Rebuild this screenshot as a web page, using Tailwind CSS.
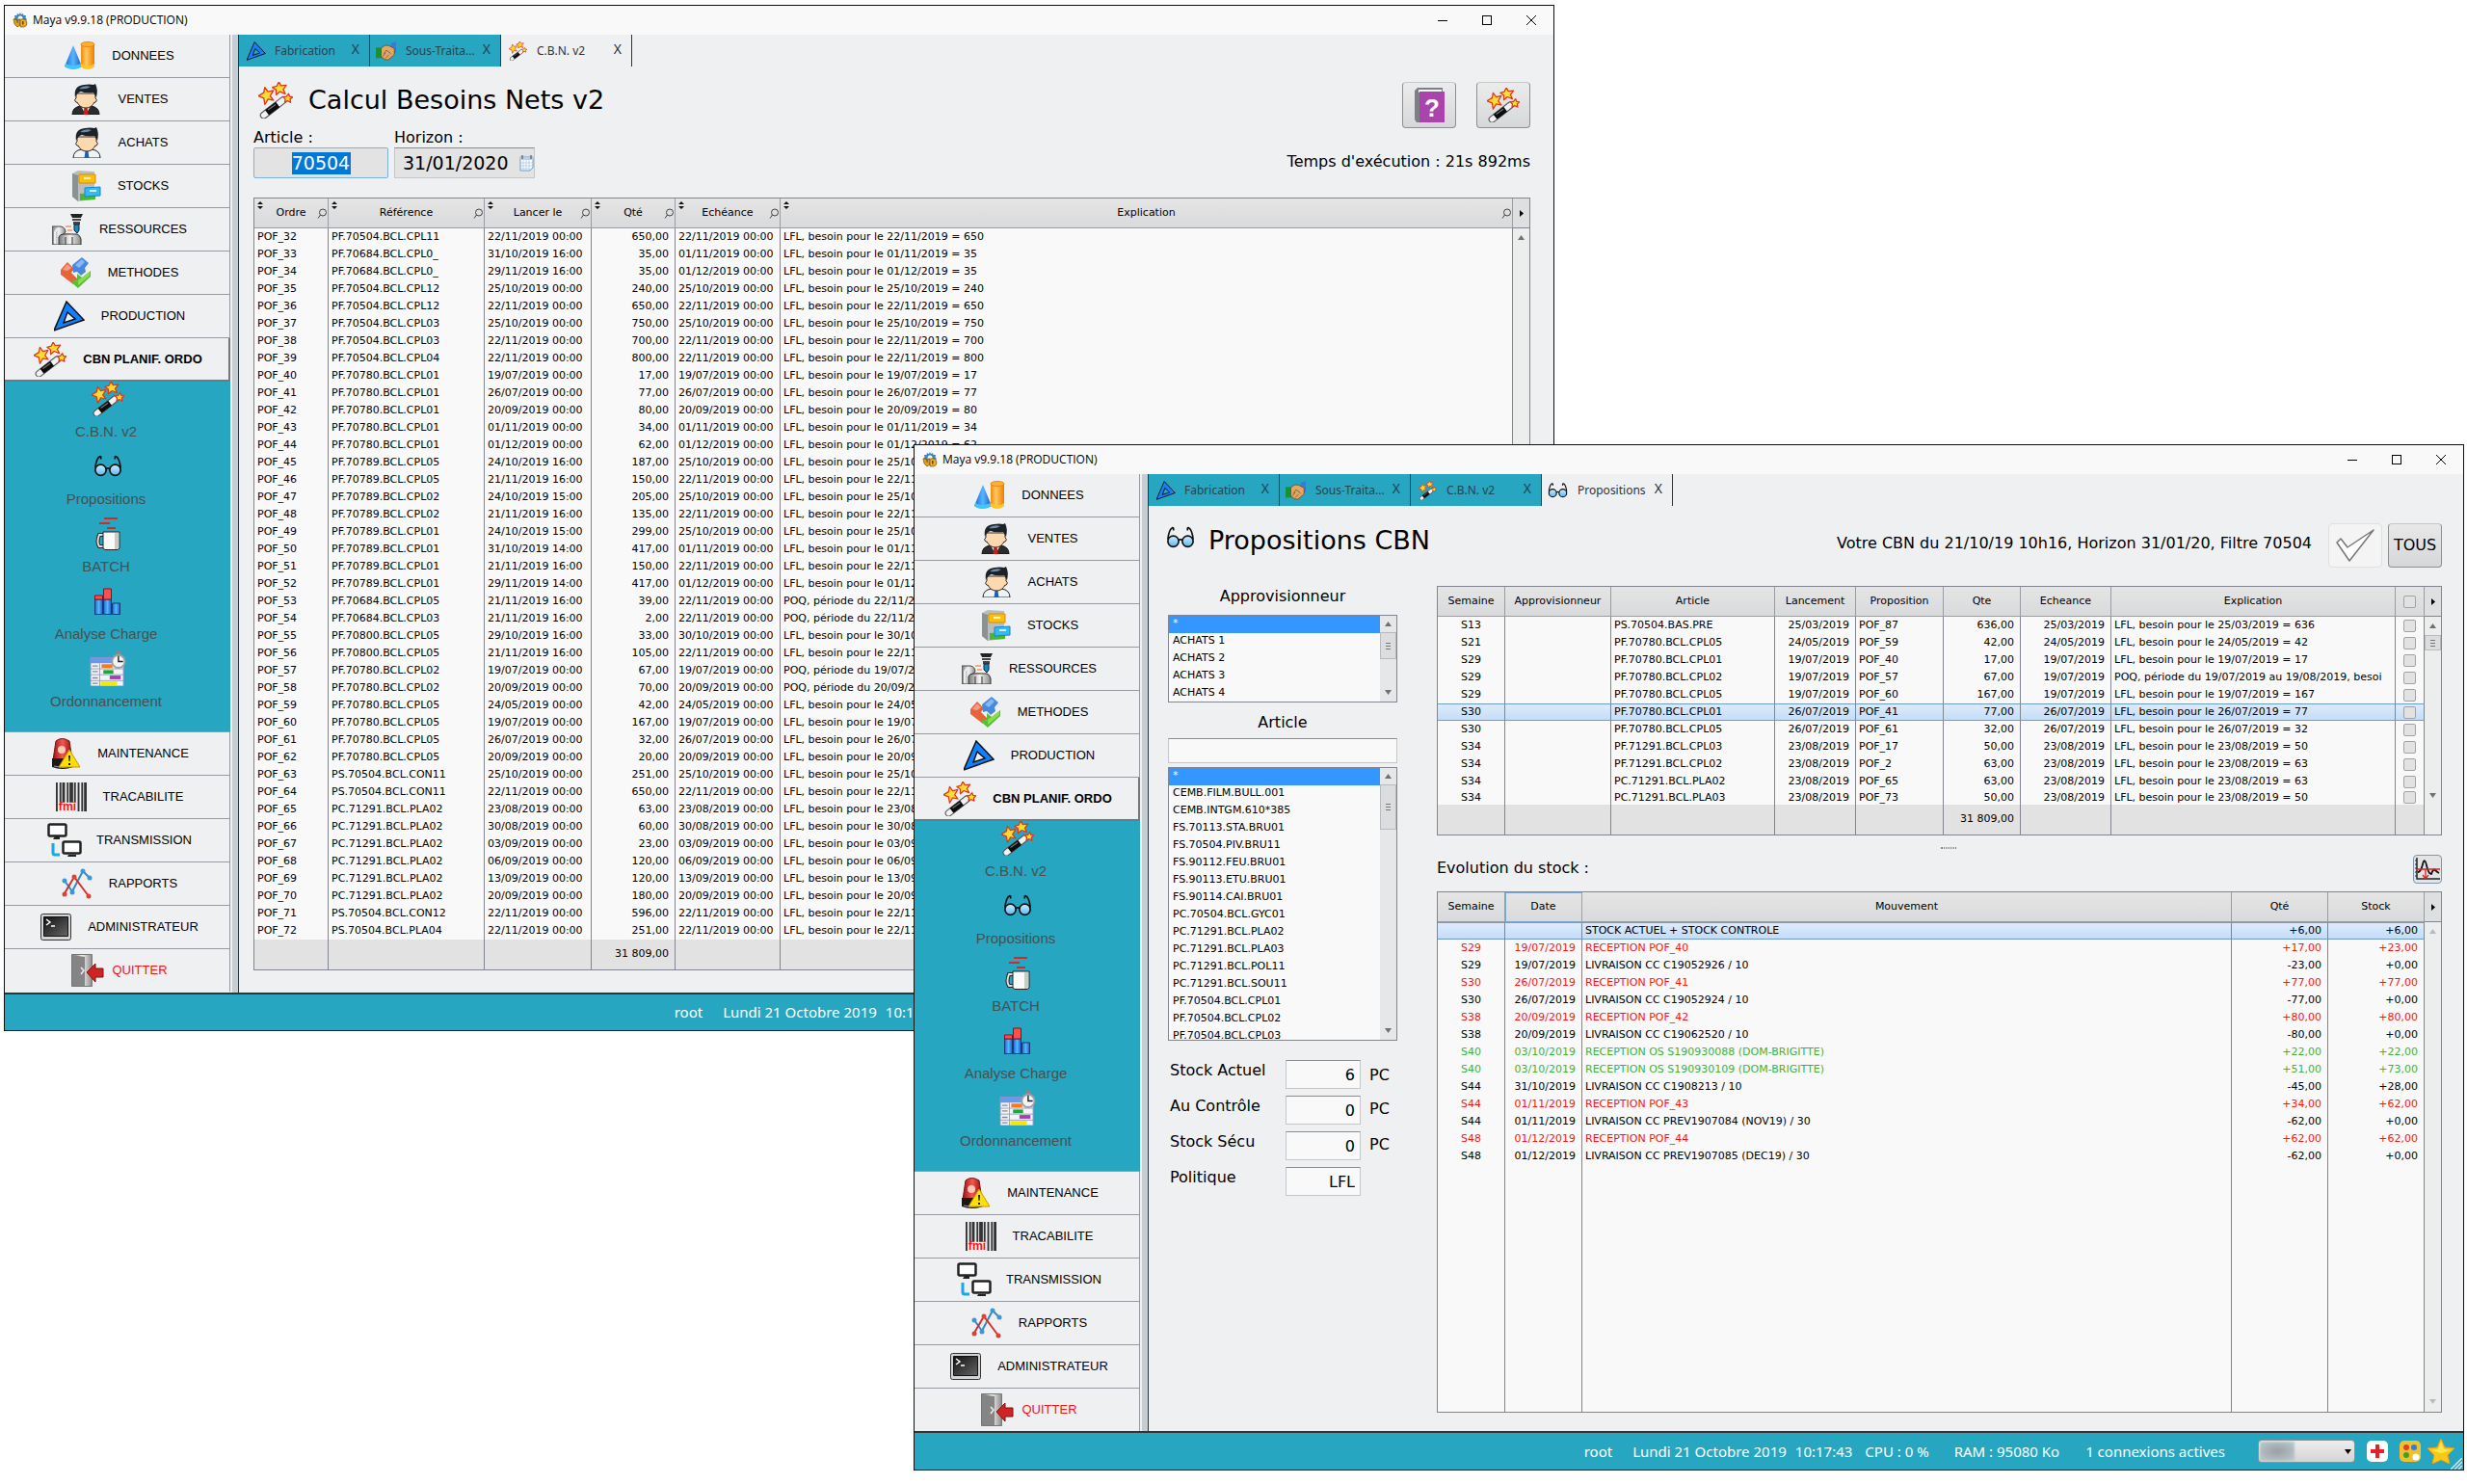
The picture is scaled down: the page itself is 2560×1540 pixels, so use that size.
<!DOCTYPE html>
<html lang="fr">
  <head>
    <meta charset="UTF-8" />
    <meta name="viewport" content="width=device-width, initial-scale=1.0" />
    <title>Maya v9.9.18 (PRODUCTION)</title>
    <script src="https://cdn.jsdelivr.net/npm/@tailwindcss/browser@4"></script>
  </head>

  <body class="bg-white text-black font-['DejaVu_Sans',Verdana,sans-serif] text-[11px]">
    <!-- Icons -->
    <svg class="absolute size-0">
      <defs>
        <linearGradient id="gBlue" x1="0" x2="1"><stop offset="0" stop-color="#1668d8" /><stop offset=".5" stop-color="#58b4ff" /><stop offset="1" stop-color="#1160c8" /></linearGradient>
        <linearGradient id="gOrange" x1="0" x2="1"><stop offset="0" stop-color="#f08a10" /><stop offset=".4" stop-color="#ffc860" /><stop offset="1" stop-color="#f07c00" /></linearGradient>
        <linearGradient id="gGrey" x1="0" x2="1"><stop offset="0" stop-color="#777" /><stop offset=".5" stop-color="#f4f4f4" /><stop offset="1" stop-color="#8a8a8a" /></linearGradient>
        <linearGradient id="gRed" x1="0" x2="1"><stop offset="0" stop-color="#a80f14" /><stop offset=".5" stop-color="#f05a50" /><stop offset="1" stop-color="#8f0a10" /></linearGradient>
        <linearGradient id="gDark" x1="0" y1="0" x2="1" y2="1"><stop offset="0" stop-color="#111" /><stop offset="1" stop-color="#666" /></linearGradient>
        <linearGradient id="gLens" x1="0" y1="0" x2="0" y2="1"><stop offset="0" stop-color="#d4efff" /><stop offset="1" stop-color="#58b6f4" /></linearGradient>
      </defs>
      <symbol id="app" viewBox="0 0 16 16">
        <path d="M8 0l1 2 2-1 .5 2H14l-.5 2.500L15 7l-2 2H3L1 7l1.500-1.500L2 3h2.500L5 1l2 1z" fill="#3a86c0" /><circle cx="8" cy="6" r="2.500" fill="#fff" />
        <path d="M1 7h3l1 4 1-4h2v6l-3 2-3-3z" fill="#e8a010" stroke="#5a4210" stroke-width=".6" /><path d="M8 7h4q3 1 3 4t-3 4H8z" fill="#f0b020" stroke="#5a4210" stroke-width=".6" /><path d="M10 9h1.500v3.500H10z" fill="#5a4210" />
      </symbol>
      <symbol id="shapes" viewBox="0 0 32 32">
        <path d="M9 5L0 27q9 6 18 0z" fill="url(#gBlue)" /><path d="M0 27q9 6 18 0l-1-3q-8 4-16 0z" fill="#3cc8ff" />
        <path d="M17 4v23q6.500 6 14 0V4z" fill="url(#gOrange)" /><path d="M17 24q7 5 14 0v3q-7 6-14 0z" fill="#ffc820" /><ellipse cx="24" cy="4" rx="7" ry="2.500" fill="#ffb030" stroke="#e88a10" />
      </symbol>
      <symbol id="suit" viewBox="0 0 32 32">
        <path d="M2 32q0-8 9-9h10q9 1 9 9z" fill="#2c2c2c" stroke="#111" /><path d="M11 23l5 9 5-9z" fill="#fff" /><path d="M14.500 24h3l1 8h-5z" fill="#d01818" />
        <path d="M6 10v5q-2 1-1 3 1 2 2 1 3 6 9 6t9-6q1 1 2-1 1-2-1-3v-5z" fill="#fdd9b0" stroke="#3a2a1a" />
        <path d="M5 14Q3 2 14 1q6-1 10 0l2-1q3 6 1 14l-3-5q-9 1-13-1-4 1-6 6z" fill="#1c222a" /><path d="M9 5q5-4 12-2-4 3-12 2z" fill="#6f8ba6" />
      </symbol>
      <symbol id="shirt" viewBox="0 0 32 32">
        <path d="M2 32q0-8 9-9h10q9 1 9 9z" fill="#eef3f8" stroke="#222" /><path d="M14.500 25h3l1 7h-5z" fill="#1c62b4" />
        <path d="M6 10v5q-2 1-1 3 1 2 2 1 3 6 9 6t9-6q1 1 2-1 1-2-1-3v-5z" fill="#fdd9b0" stroke="#3a2a1a" />
        <path d="M5 14Q3 2 14 1q6-1 10 0l2-1q3 6 1 14l-3-5q-9 1-13-1-4 1-6 6z" fill="#1c222a" /><path d="M9 5q5-4 12-2-4 3-12 2z" fill="#6f8ba6" />
      </symbol>
      <symbol id="drawers" viewBox="0 0 32 32">
        <path d="M2 3l6-3 17 1v29l-17 2-6-5z" fill="#b9bdc0" /><path d="M2 3l6 2v27l-6-5z" fill="#8c9194" />
        <path d="M9 4h17v9H9z" fill="#fbbf10" stroke="#d89000" /><path d="M14 7h7v2h-7z" fill="#fff4c0" />
        <path d="M10 24l16-1v7l-16 1z" fill="#48b830" /><path d="M15 18l16-1v9l-16 1z" fill="#38b8f4" stroke="#1088c8" /><path d="M20 20h7v2h-7z" fill="#d8f4ff" />
      </symbol>
      <symbol id="machine" viewBox="0 0 32 32">
        <path d="M19 0h13l-2 4h-9z" fill="#222" /><path d="M21 5h9v2h-9zM22 8h7v3h-7z" fill="#444" /><path d="M23 11h5v6l-2 3-3-3z" fill="#1488b8" stroke="#124" />
        <path d="M14 13h6M16 17h5M13 21h6" stroke="#e87020" />
        <path d="M0 13h9q5 1 5 6l-4 3v10H0z" fill="url(#gGrey)" stroke="#444" /><path d="M7 32V24q1-3 5-3h14q3 1 4 5v6z" fill="url(#gGrey)" stroke="#333" /><path d="M14 32v-8M21 32v-8" stroke="#333" /><path d="M3 31V19q1-3 4-3" fill="none" stroke="#eee" stroke-width="2" />
      </symbol>
      <symbol id="cubes" viewBox="0 0 32 32">
        <path d="M0 13l7-8 7 7-3 4 7 7-5 5L0 18z" fill="#e8623c" /><path d="M2 13l5-6 4 4-4 3z" fill="#f4a080" />
        <path d="M12 8L22 0l7 6-4 5 1 4-5 4-4-4-4 1z" fill="#4888e0" /><path d="M15 8l7-6 3 3-6 6z" fill="#88b8f4" />
        <path d="M17 17l5 4 9-7v6L18 32l-7-6 3-3 3 2z" fill="#58c030" /><path d="M18 24l12-9v4l-12 10z" fill="#88e050" />
      </symbol>
      <symbol id="triangle" viewBox="0 0 32 32">
        <path fill-rule="evenodd" d="M13 1l18 19L0 31zM14 12l-4 11 12-4z" fill="#1080ff" stroke="#111" stroke-width="1.500" />
      </symbol>
      <symbol id="wand" viewBox="0 0 32 34">
        <path d="M5 31L23 17" stroke="#555" stroke-width="7" stroke-linecap="round" /><path d="M5 31L23 17" stroke="#f2f2f2" stroke-width="5" stroke-linecap="round" /><path d="M8 28.500l10-7.500" stroke="#0c0c0c" stroke-width="6" /><path d="M9 26l7-5" stroke="#777" />
        <g fill="#ffdc30" stroke="#e03818" stroke-width="1.200" stroke-linejoin="round">
          <path d="M6 5l3 4 5-1-3 5 3 4-5-1-3 5-1-6-5-2 5-3z" /><path d="M19 0l2 3.500 5-.5-3 4 2 4-5-2-3.500 3V7.500L13 5l4-1z" /><path d="M28 11l1 2.500 3 .5-2.500 2 .5 3-3-1.500-2.500 1.500.5-3-2-2 3-.5z" />
        </g>
      </symbol>
      <symbol id="glasses" viewBox="0 0 32 24">
        <path d="M2 14Q3 3 7 1q2 0 1 3M30 14Q29 3 25 1q-2 0-1 3M13 15q3-2 6 0" fill="none" stroke="#111" stroke-width="1.800" />
        <circle cx="8" cy="16" r="6" fill="url(#gLens)" stroke="#111" stroke-width="1.800" /><circle cx="24" cy="16" r="6" fill="url(#gLens)" stroke="#111" stroke-width="1.800" />
      </symbol>
      <symbol id="mug" viewBox="0 0 26 36">
        <path d="M9 2h14M4 7h11M12 12h9" stroke="#d82820" stroke-width="2" /><path d="M9 19H4q-3 8 0 12h5" fill="none" stroke="#222" stroke-width="4" /><path d="M9 19H4q-3 8 0 12h5" fill="none" stroke="#ddd" stroke-width="2" /><path d="M8 16h17v17l-2 1.500H10L8 33z" fill="#fafafa" stroke="#222" /><path d="M20 17h4v15l-2 2h-2z" fill="#c8ccc8" />
      </symbol>
      <symbol id="bars" viewBox="0 0 28 28">
        <path d="M.5 12h8v15.500h-8z" fill="url(#gBlue)" stroke="#103c78" /><path d="M9.500 12h8v15.500h-8z" fill="url(#gBlue)" stroke="#103c78" /><path d="M18.500 16h8v11.500h-8z" fill="url(#gBlue)" stroke="#103c78" /><path d="M.5 8h8v4h-8zM9.500 1h8v11h-8z" fill="#f85050" stroke="#901010" />
      </symbol>
      <symbol id="gantt" viewBox="0 0 38 38">
        <path d="M0 7h36v31H0z" fill="#f2f4f8" stroke="#8a94c8" /><path d="M0 7h36v6H0z" fill="#6c98ec" /><path d="M10 13v25M0 19h36M0 25.500h36M0 32h36" stroke="#98a0b8" />
        <path d="M2 16h6M2 22h6M2 29h6M2 35h6" stroke="#888" stroke-width="1.500" /><path d="M12 14h12v4H12z" fill="#f87820" /><path d="M14 20.500h11v4H14z" fill="#18a838" /><path d="M21 26.500h12v4H21z" fill="#a040b0" /><path d="M11 33h18v4H11z" fill="#f8e800" />
        <path d="M28 0h5v4h-5z" fill="#888" /><circle cx="30.500" cy="11" r="7" fill="#f4f4f4" stroke="#98a0a8" stroke-width="2" /><path d="M30.500 5v6h5" fill="none" stroke="#222" stroke-width="1.500" />
      </symbol>
      <symbol id="siren" viewBox="0 0 32 32">
        <path d="M6 3q6-5 14 0l3 20H3z" fill="url(#gRed)" stroke="#701010" /><circle cx="12" cy="12" r="4" fill="#ffc8b8" /><path d="M2 21h22v9q-11 4-22 0z" fill="#181818" /><path d="M4 29q9 3 18 0" stroke="#999" fill="none" />
        <path d="M20 12l11 18H9z" fill="#ffe000" stroke="#c89800" stroke-linejoin="round" /><path d="M19 18h2l-.5 6h-1zM19 26h2v2h-2z" fill="#111" />
      </symbol>
      <symbol id="barcode" viewBox="0 0 34 32">
        <path d="M0 0h2v32H0zM4 0h2v22H4zM7 0h3v22H7zM12 0h2v22h-2zM15 0h4v22h-4zM20 0h2v22h-2zM24 0h2v32h-2zM28 0h2v32h-2zM31 0h3v32h-3z" fill="#333" /><text x="3" y="31" font-size="13" font-weight="bold" fill="#f01818" font-family="Liberation Sans, sans-serif">fmi</text>
      </symbol>
      <symbol id="network" viewBox="0 0 36 36">
        <rect x="1.500" y="1.500" width="18" height="12" rx="1.500" fill="#fff" stroke="#222" stroke-width="2.500" /><path d="M8 14h5v3H6z" fill="#222" /><rect x="16.500" y="19.500" width="18" height="12" rx="1.500" fill="#fff" stroke="#222" stroke-width="2.500" /><path d="M22 33h8v2h-9z" fill="#222" /><path d="M6 21v10q0 2 2 2h5" fill="none" stroke="#18a8f0" stroke-width="3" />
      </symbol>
      <symbol id="graph" viewBox="0 0 32 32">
        <path d="M3 13l8 11L22 3l7 7" fill="none" stroke="#3a88c8" stroke-width="2" /><path d="M3 26L13 9l15 20" fill="none" stroke="#d83028" stroke-width="2" />
        <g fill="#3a98d8"><circle cx="3" cy="13" r="2.500" /><circle cx="11" cy="25" r="2.500" /><circle cx="22" cy="3" r="2.500" /><circle cx="29" cy="10" r="2.500" /></g><g fill="#e04038"><circle cx="3" cy="27" r="2.500" /><circle cx="13" cy="9" r="2.500" /><circle cx="28" cy="29" r="2.500" /></g>
      </symbol>
      <symbol id="terminal" viewBox="0 0 32 28">
        <rect x=".5" y=".5" width="31" height="27" rx="2" fill="#d4d4d4" stroke="#333" /><path d="M3.500 3.500h25v20h-25z" fill="url(#gDark)" stroke="#111" /><path d="M6 6l4 3-4 3M11 13h4" fill="none" stroke="#fff" stroke-width="1.500" />
      </symbol>
      <symbol id="door" viewBox="0 0 34 34">
        <path d="M.5.5h21v33H.5z" fill="url(#gGrey)" stroke="#777" /><path d="M1 1l13 2v30H1z" fill="#858585" /><path d="M10 14l3 3-3 4" fill="none" stroke="#eee" stroke-width="1.500" /><path d="M16 19l9-9v5h8v9h-8v5z" fill="#d02424" stroke="#801010" />
      </symbol>
      <symbol id="hands" viewBox="0 0 24 22">
        <path d="M0 7h8v12H0z" fill="#189038" /><path d="M17 2l6-2v12l-4 3z" fill="#3080d8" /><path d="M6 8q4-5 9-3l6 3v7l-7 6q-4 1-8-4z" fill="#e0a868" stroke="#7a4a20" /><path d="M9 14l3-4 5 4M8 17l3-4M11 19l4-4" stroke="#8a5828" fill="none" />
      </symbol>
      <symbol id="book" viewBox="0 0 32 36">
        <path d="M1 3l3-3h26v5H6v31H3L1 33z" fill="#7e7e84" /><path d="M5 2h24v3H5z" fill="#f4f4f4" /><path d="M6 4h26v32H6z" fill="#aa44ac" /><text x="11" y="30" font-size="26" font-weight="bold" fill="#fff" font-family="Liberation Sans, sans-serif">?</text>
      </symbol>
      <symbol id="check" viewBox="0 0 40 34"><path d="M1 14l4-4 7 9L39 1 14 33z" fill="#fff" stroke="#777" stroke-width="1.500" stroke-linejoin="round" /></symbol>
      <symbol id="curve" viewBox="0 0 26 24">
        <path d="M2 0v22h24" fill="none" stroke="#222" stroke-width="1.500" /><path d="M0 3h2M0 7h2M0 11h2M0 15h2M0 19h2" stroke="#222" /><path d="M3 15q3 0 5-8 2-8 4 1 2 9 5 9 2-6 4-4t4 3" fill="none" stroke="#111" stroke-width="1.800" /><path d="M2 12h24M11 12v9M8 18l3 4 3-4" fill="none" stroke="#e02020" stroke-width="1.300" />
      </symbol>
      <symbol id="calendar" viewBox="0 0 15 17">
        <path d="M1 2h13v11l-3 3H1z" fill="#fff" stroke="#6c98c8" /><path d="M1 2h13v3H1z" fill="#b4d0ec" /><path d="M4 5v11M7 5v11M10 5v11M1 8h13M1 11h13M1 14h12" stroke="#a8c4e0" stroke-width=".7" /><path d="M3 0v4M12 0v4" stroke="#444" />
      </symbol>
      <symbol id="cross" viewBox="0 0 22 22"><rect width="22" height="22" rx="5" fill="#fff" /><path d="M9 4h4v5h5v4h-5v5H9v-5H4V9h5z" fill="#e8202c" /></symbol>
      <symbol id="palette" viewBox="0 0 22 22"><rect width="22" height="22" rx="5" fill="#f0c030" /><circle cx="7" cy="7" r="3" fill="#e04020" /><circle cx="15" cy="7" r="3" fill="#3878e0" /><circle cx="7" cy="15" r="3" fill="#40a020" /><circle cx="17" cy="17" r="3.500" fill="#fff" /></symbol>
      <symbol id="star" viewBox="0 0 28 26"><path d="M14 0l4 9 10 1-7 7 2 9-9-4-9 4 2-9-7-7 10-1z" fill="#fcc818" stroke="#e8a010" /><path d="M14 3l3 8 7 1-10 3-10-3 7-1z" fill="#ffe850" /></symbol>
      <symbol id="loupe" viewBox="0 0 10 11"><circle cx="6" cy="4.500" r="3.500" fill="none" stroke="#444" /><path d="M3.500 7L1 10.500" stroke="#444" /></symbol>
      <symbol id="sort" viewBox="0 0 6 8"><path d="M3 0l3 3H0zM3 8L0 5h6z" fill="#111" /></symbol>
      <symbol id="up" viewBox="0 0 7 5"><path d="M3.500 0L7 5H0z" fill="#707070" /></symbol>
      <symbol id="down" viewBox="0 0 7 5"><path d="M3.500 5L7 0H0z" fill="#707070" /></symbol>
    </svg>

    <!-- Left menu, the same in both windows -->
    <template id="menu">
      <nav class="w-[234px] shrink-0 font-['Liberation_Sans',Arial,sans-serif] text-[13px]">
        <button class="flex h-[45px] w-full items-center justify-center gap-[17px] border-r border-b border-[#989aa2] pl-[5px]"><svg class="size-8"><use href="#shapes" /></svg>DONNEES</button>
        <button class="flex h-[45px] w-full items-center justify-center gap-[17px] border-r border-b border-[#989aa2] pl-[5px]"><svg class="size-8"><use href="#suit" /></svg>VENTES</button>
        <button class="flex h-[45px] w-full items-center justify-center gap-[17px] border-r border-b border-[#989aa2] pl-[5px]"><svg class="size-8"><use href="#shirt" /></svg>ACHATS</button>
        <button class="flex h-[45px] w-full items-center justify-center gap-[17px] border-r border-b border-[#989aa2] pl-[5px]"><svg class="size-8"><use href="#drawers" /></svg>STOCKS</button>
        <button class="flex h-[45px] w-full items-center justify-center gap-[17px] border-r border-b border-[#989aa2] pl-[5px]"><svg class="size-8"><use href="#machine" /></svg>RESSOURCES</button>
        <button class="flex h-[45px] w-full items-center justify-center gap-[17px] border-r border-b border-[#989aa2] pl-[5px]"><svg class="size-8"><use href="#cubes" /></svg>METHODES</button>
        <button class="flex h-[45px] w-full items-center justify-center gap-[17px] border-r border-b border-[#989aa2] pl-[5px]"><svg class="size-8"><use href="#triangle" /></svg>PRODUCTION</button>
        <button class="flex h-[45px] w-full items-center justify-center gap-[17px] border-r-2 border-b-2 border-[#75777c] pl-[3px] font-bold"><svg class="h-9 w-[34px]"><use href="#wand" /></svg>CBN PLANIF. ORDO</button>
        <ul class="h-[364px] border-b border-[#989aa2] bg-[#26a6c1] pr-6 text-center text-[15px] text-[#4a4f52]">
          <li class="h-[70px]"><a href="#" class="flex flex-col items-center gap-[5px]"><svg class="ml-1 h-9 w-[34px]"><use href="#wand" /></svg>C.B.N. v2</a></li>
          <li class="h-[70px]"><a href="#" class="flex flex-col items-center gap-[5px]"><svg class="ml-1 h-9 w-[30px]"><use href="#glasses" /></svg>Propositions</a></li>
          <li class="h-[70px]"><a href="#" class="flex flex-col items-center gap-[5px]"><svg class="ml-1 h-9 w-[26px]"><use href="#mug" /></svg>BATCH</a></li>
          <li class="h-[70px]"><a href="#" class="flex flex-col items-center gap-[5px]"><svg class="ml-1 h-9 w-7"><use href="#bars" /></svg>Analyse Charge</a></li>
          <li class="h-[70px]"><a href="#" class="flex flex-col items-center gap-[5px]"><svg class="ml-1 h-9 w-[38px]"><use href="#gantt" /></svg>Ordonnancement</a></li>
        </ul>
        <button class="flex h-[45px] w-full items-center justify-center gap-[17px] border-r border-b border-[#989aa2] pl-[5px]"><svg class="size-8"><use href="#siren" /></svg>MAINTENANCE</button>
        <button class="flex h-[45px] w-full items-center justify-center gap-[17px] border-r border-b border-[#989aa2] pl-[5px]"><svg class="size-8"><use href="#barcode" /></svg>TRACABILITE</button>
        <button class="flex h-[45px] w-full items-center justify-center gap-[15px] border-r border-b border-[#989aa2] pl-[5px]"><svg class="size-9"><use href="#network" /></svg>TRANSMISSION</button>
        <button class="flex h-[45px] w-full items-center justify-center gap-[17px] border-r border-b border-[#989aa2] pl-[5px]"><svg class="size-8"><use href="#graph" /></svg>RAPPORTS</button>
        <button class="flex h-[45px] w-full items-center justify-center gap-[17px] border-r border-b border-[#989aa2] pl-[5px]"><svg class="size-8"><use href="#terminal" /></svg>ADMINISTRATEUR</button>
        <button class="flex h-11 w-full items-center justify-center gap-[8px] border-r border-[#989aa2] pl-[5px] text-[#f01414]"><svg class="size-[34px]"><use href="#door" /></svg>QUITTER</button>
      </nav>
      <div class="ml-[2px] w-[7px] shrink-0 border-r border-[#333] bg-[#c5cdd5]"></div>
    </template>

    <template id="titlebar">
      <svg class="mr-[5px] size-4"><use href="#app" /></svg>Maya v9.9.18 (PRODUCTION)
      <button aria-label="Réduire" class="mr-9 ml-auto h-px w-[10px] bg-black"></button>
      <button aria-label="Agrandir" class="mr-9 size-[10px] border border-black"></button>
      <button aria-label="Fermer" class="mr-[18px]"><svg class="size-[10px]" viewBox="0 0 10 10"><path d="M0 0l10 10M10 0L0 10" stroke="#000" /></svg></button>
    </template>

    <template id="status">
      <span class="mr-[21px]">root</span>
      <span class="mr-[9px]">Lundi 21 Octobre 2019</span>
      <span class="mr-[13px]">10:17:43</span>
      <span class="mr-[26px]">CPU : 0 %</span>
      <span class="mr-[27px]">RAM : 95080 Ko</span>
      <span class="mr-[34px]">1 connexions actives</span>
      <div class="relative mr-3">
        <select aria-label="Base" class="block h-6 w-[101px] appearance-none rounded-sm border border-[#8e8f8f] bg-linear-to-b from-[#eee] to-[#d4d4d4]"><option></option></select>
        <span class="pointer-events-none absolute top-[2px] left-[2px] h-5 w-9 bg-radial from-[#9a9fa2] to-[#bccdd4] blur-[1px]"></span>
        <svg class="pointer-events-none absolute top-[10px] right-1 h-[5px] w-[7px]" viewBox="0 0 7 5"><path d="M0 0h7L3.500 5z" /></svg>
      </div>
      <button aria-label="Aide" class="mr-3"><svg class="size-[22px]"><use href="#cross" /></svg></button>
      <button aria-label="Couleurs" class="mr-[7px]"><svg class="size-[22px]"><use href="#palette" /></svg></button>
      <button aria-label="Favoris"><svg class="h-[26px] w-7"><use href="#star" /></svg></button>
      <svg class="-ml-1 size-3 self-end" viewBox="0 0 12 12"><path d="M0 12L12 0M4 12l8-8M8 12l4-4" stroke="#d8e4e8" stroke-width="1.500" /></svg>
    </template>

    <div class="grid">
      <!-- Back window: C.B.N. v2 -->
      <section class="col-start-1 row-start-1 mt-[5px] mr-[947px] ml-1 self-start border border-[#111] bg-[#eff0f2]">
        <header data-use="titlebar" class="flex h-[30px] items-center bg-[#f9f9f9] pl-2 font-['Open_Sans','Segoe_UI',sans-serif] text-[12px]"></header>
        <div class="flex border-b-2 border-[#333]">
          <div data-use="menu" class="contents"></div>
          <main class="min-w-0 flex-1">
            <div class="flex h-[33px] font-['Noto_Sans','Trebuchet_MS',sans-serif] text-[12px] text-[#27444f]">
              <a href="#" class="flex w-[136px] items-center border-r border-[#333] bg-[#26a6c1] pr-[10px] pl-2"><svg class="mr-[9px] size-5"><use href="#triangle" /></svg>Fabrication<span class="mb-1 ml-auto text-[14px]">X</span></a>
              <a href="#" class="flex w-[136px] items-center border-r border-[#333] bg-[#26a6c1] pr-[10px] pl-[6px]"><svg class="mr-[9px] size-[22px]"><use href="#hands" /></svg>Sous-Traita...<span class="mb-1 ml-auto text-[14px]">X</span></a>
              <a href="#" class="flex w-[136px] items-center border-r border-[#333] pr-[10px] pl-2 text-[#333]"><svg class="mr-[10px] h-5 w-[19px]"><use href="#wand" /></svg>C.B.N. v2<span class="mb-1 ml-auto text-[14px]">X</span></a>
            </div>
            <div class="pt-4 pr-6 pb-[23px] pl-[15px]">
              <div class="flex justify-between text-[16px] leading-5">
                <div>
                  <div class="flex h-[38px] items-center gap-4 pl-[5px]">
                    <svg class="h-[38px] w-[36px]"><use href="#wand" /></svg>
                    <h1 class="text-[27px]">Calcul Besoins Nets v2</h1>
                  </div>
                  <div class="mt-[10px] flex gap-[6px]">
                    <label>Article :
                      <span class="flex h-8 w-[140px] items-center justify-center rounded-xs border border-[#7eb0de] bg-[#e3e3e3] text-[19px]"><input value="70504" class="h-[23px] w-[61px] bg-[#0078d7] text-center text-white" /></span>
                    </label>
                    <label>Horizon :
                      <span class="flex h-8 w-[146px] items-center border border-[#c4c6ca] border-t-[#8a8c90] bg-[#e3e3e3] pl-2 text-[19px]"><input value="31/01/2020" class="w-[121px]" /><svg class="h-[17px] w-[15px]"><use href="#calendar" /></svg></span>
                    </label>
                  </div>
                </div>
                <div class="flex flex-col items-end">
                  <div class="mb-[25px] flex gap-[21px]">
                    <button aria-label="Aide" class="flex h-12 w-14 items-center justify-center rounded border border-[#8e8f8f] border-t-[#c8c8c8] bg-linear-to-b from-[#ececec] to-[#d6d7d9]"><svg class="h-9 w-8"><use href="#book" /></svg></button>
                    <button aria-label="Lancer" class="flex h-12 w-14 items-center justify-center rounded border border-[#8e8f8f] border-t-[#c8c8c8] bg-linear-to-b from-[#ececec] to-[#d6d7d9]"><svg class="h-9 w-[34px]"><use href="#wand" /></svg></button>
                  </div>
                  <p>Temps d'exécution : 21s 892ms</p>
                </div>
              </div>

              <div class="mt-5 flex border border-[#82858f] bg-[#f9f9f9]">
                <table class="w-full table-fixed border-separate border-spacing-0">
                  <thead>
                    <tr id="cbnHead"></tr>
                  </thead>
                  <tbody id="cbnRows"></tbody>
                  <tfoot>
                    <tr class="h-[31px] bg-[#e2e2e2]">
                      <td class="border-r border-[#82858f]"></td><td class="border-r border-[#82858f]"></td><td class="border-r border-[#82858f]"></td>
                      <td class="border-r border-[#82858f] pr-[6px] text-right">31 809,00</td>
                      <td class="border-r border-[#82858f]"></td><td class="border-r border-[#82858f]"></td>
                    </tr>
                  </tfoot>
                </table>
                <div class="flex w-[17px] shrink-0 flex-col items-center bg-[#eceded]">
                  <div class="flex h-[31px] w-full items-center justify-center border-b border-[#82858f] bg-[#dedfe0]"><svg class="h-[7px] w-1" viewBox="0 0 4 7"><path d="M0 0l4 3.500L0 7z" /></svg></div>
                  <svg class="mt-[7px] h-[5px] w-[7px]"><use href="#up" /></svg>
                </div>
              </div>
            </div>
          </main>
        </div>
        <footer data-use="status" class="flex h-[37px] items-center justify-end overflow-hidden bg-[#26a6c1] pr-px font-['Noto_Sans','Trebuchet_MS',sans-serif] text-[15px] whitespace-nowrap text-white"></footer>
      </section>

      <!-- Front window: Propositions -->
      <section class="z-10 col-start-1 row-start-1 mt-[461px] mr-[3px] mb-[14px] ml-[948px] self-start border border-[#111] bg-[#eff0f2]">
        <header data-use="titlebar" class="flex h-[30px] items-center bg-[#f9f9f9] pl-2 font-['Open_Sans','Segoe_UI',sans-serif] text-[12px]"></header>
        <div class="flex border-b-2 border-[#333]">
          <div data-use="menu" class="contents"></div>
          <main class="min-w-0 flex-1">
            <div class="flex h-[33px] font-['Noto_Sans','Trebuchet_MS',sans-serif] text-[12px] text-[#27444f]">
              <a href="#" class="flex w-[136px] items-center border-r border-[#333] bg-[#26a6c1] pr-[10px] pl-2"><svg class="mr-[9px] size-5"><use href="#triangle" /></svg>Fabrication<span class="mb-1 ml-auto text-[14px]">X</span></a>
              <a href="#" class="flex w-[136px] items-center border-r border-[#333] bg-[#26a6c1] pr-[10px] pl-[6px]"><svg class="mr-[9px] size-[22px]"><use href="#hands" /></svg>Sous-Traita...<span class="mb-1 ml-auto text-[14px]">X</span></a>
              <a href="#" class="flex w-[136px] items-center border-r border-[#333] bg-[#26a6c1] pr-[10px] pl-2"><svg class="mr-[10px] h-5 w-[19px]"><use href="#wand" /></svg>C.B.N. v2<span class="mb-1 ml-auto text-[14px]">X</span></a>
              <a href="#" class="flex w-[136px] items-center border-r border-[#333] pr-[10px] pl-[6px] text-[#333]"><svg class="mr-[10px] h-5 w-[21px]"><use href="#glasses" /></svg>Propositions<span class="mb-1 ml-auto text-[14px]">X</span></a>
            </div>

            <div class="flex items-start pt-[18px] pr-[22px] pl-[18px] text-[16px]">
              <svg class="mt-[3px] h-6 w-[30px]"><use href="#glasses" /></svg>
              <h1 class="ml-[14px] text-[27px] leading-9">Propositions CBN</h1>
              <p class="mr-[17px] ml-auto leading-[42px]">Votre CBN du 21/10/19 10h16, Horizon 31/01/20, Filtre 70504</p>
              <button aria-label="Valider" class="mr-[6px] flex h-[46px] w-14 items-center justify-center rounded border border-[#e0e0e0] bg-[#f4f4f5]"><svg class="h-[34px] w-10"><use href="#check" /></svg></button>
              <button class="h-[46px] w-14 rounded border border-[#8e8f8f] border-t-[#c8c8c8] bg-linear-to-b from-[#e8e8e8] to-[#d6d7d9]">TOUS</button>
            </div>

            <div class="flex gap-[41px] pt-[19px] pr-[22px] pb-[19px] pl-5">
              <!-- Filters and stock figures -->
              <div class="w-[238px] shrink-0">
                <h2 class="mb-2 text-center text-[16px] leading-[22px]">Approvisionneur</h2>
                <div class="flex h-[91px] overflow-hidden border border-[#82858f] bg-[#f9f9f9]">
                  <ul id="buyers" role="listbox" aria-label="Approvisionneur" class="flex-1"></ul>
                  <div class="flex w-[17px] flex-col items-center bg-[#e6e7e8] pb-[7px]">
                    <svg class="my-[6px] h-[5px] w-[7px] shrink-0"><use href="#up" /></svg>
                    <div class="flex h-[28px] w-full shrink-0 flex-col items-center justify-center gap-[2px] border border-[#b8babe] bg-[#dcddde]"><i class="h-px w-[5px] bg-[#777]"></i><i class="h-px w-[5px] bg-[#777]"></i><i class="h-px w-[5px] bg-[#777]"></i></div>
                    <svg class="mt-auto h-[5px] w-[7px] shrink-0"><use href="#down" /></svg>
                  </div>
                </div>
                <label for="article" class="mt-[10px] mb-[5px] block text-center text-[16px] leading-[22px]">Article</label>
                <input id="article" class="mb-1 block h-[26px] w-full border border-[#c4c6ca] border-t-[#8a8c90] bg-[#f9f9f9]" />
                <div class="flex h-[284px] overflow-hidden border border-[#82858f] bg-[#f9f9f9]">
                  <ul id="articles" role="listbox" aria-label="Article" class="flex-1"></ul>
                  <div class="flex w-[17px] flex-col items-center bg-[#e6e7e8] pb-[7px]">
                    <svg class="my-[6px] h-[5px] w-[7px] shrink-0"><use href="#up" /></svg>
                    <div class="flex h-[47px] w-full shrink-0 flex-col items-center justify-center gap-[2px] border border-[#b8babe] bg-[#dcddde]"><i class="h-px w-[5px] bg-[#777]"></i><i class="h-px w-[5px] bg-[#777]"></i><i class="h-px w-[5px] bg-[#777]"></i></div>
                    <svg class="mt-auto h-[5px] w-[7px] shrink-0"><use href="#down" /></svg>
                  </div>
                </div>
                <div class="mt-5 grid grid-cols-[120px_78px_1fr] gap-y-[7px] pl-[2px] text-[16px] leading-[22px]">
                  <label for="actuel">Stock Actuel</label><input id="actuel" value="6" class="h-[30px] border border-[#c4c6ca] border-t-[#8a8c90] bg-[#f9f9f9] pr-[5px] text-right" /><span class="pt-[5px] pl-[9px]">PC</span>
                  <label for="controle">Au Contrôle</label><input id="controle" value="0" class="h-[30px] border border-[#c4c6ca] border-t-[#8a8c90] bg-[#f9f9f9] pr-[5px] text-right" /><span class="pt-[3px] pl-[9px]">PC</span>
                  <label for="secu">Stock Sécu</label><input id="secu" value="0" class="h-[30px] border border-[#c4c6ca] border-t-[#8a8c90] bg-[#f9f9f9] pr-[5px] text-right" /><span class="pt-[3px] pl-[9px]">PC</span>
                  <label for="politique">Politique</label><input id="politique" value="LFL" class="h-[30px] border border-[#c4c6ca] border-t-[#8a8c90] bg-[#f9f9f9] pr-[5px] text-right" />
                </div>
              </div>

              <div class="min-w-0 flex-1">
                <!-- Proposals -->
                <div class="flex border border-[#82858f] bg-[#f9f9f9]">
                  <table class="w-full table-fixed border-separate border-spacing-0">
                    <thead>
                      <tr id="propHead"></tr>
                    </thead>
                    <tbody id="propRows"></tbody>
                    <tfoot>
                      <tr class="h-[31px] bg-[#e2e2e2]">
                        <td class="border-r border-[#82858f]"></td><td class="border-r border-[#82858f]"></td><td class="border-r border-[#82858f]"></td><td class="border-r border-[#82858f]"></td><td class="border-r border-[#82858f]"></td>
                        <td class="border-r border-[#82858f] pr-[6px] text-right">31 809,00</td>
                        <td class="border-r border-[#82858f]"></td><td class="border-r border-[#82858f]"></td><td class="border-r border-[#82858f]"></td>
                      </tr>
                    </tfoot>
                  </table>
                  <div class="flex w-[17px] shrink-0 flex-col items-center bg-[#eceded] pb-[38px]">
                    <div class="flex h-[31px] w-full shrink-0 items-center justify-center border-b border-[#82858f] bg-[#dedfe0]"><svg class="h-[7px] w-1" viewBox="0 0 4 7"><path d="M0 0l4 3.500L0 7z" /></svg></div>
                    <svg class="my-[7px] h-[5px] w-[7px] shrink-0"><use href="#up" /></svg>
                    <div class="flex h-4 w-full flex-col items-center justify-center gap-[2px] border border-[#b8babe] bg-[#dcddde]"><i class="h-px w-[5px] bg-[#777]"></i><i class="h-px w-[5px] bg-[#777]"></i><i class="h-px w-[5px] bg-[#777]"></i></div>
                    <svg class="mt-auto h-[5px] w-[7px] shrink-0"><use href="#down" /></svg>
                  </div>
                </div>
                <div class="mt-3 mb-[6px] flex justify-center pl-[18px]"><i class="h-[2px] w-4 border-y border-dotted border-[#888]"></i></div>

                <!-- Stock evolution -->
                <div class="mb-2 flex items-start justify-between text-[16px] leading-[27px]">
                  <h2>Evolution du stock :</h2>
                  <button aria-label="Graphique" class="flex h-[30px] w-[30px] items-center justify-center rounded-sm border border-[#7f95b0] bg-[#e2e4e6]"><svg class="h-6 w-[26px]"><use href="#curve" /></svg></button>
                </div>
                <div class="flex border border-[#82858f] bg-[#f9f9f9]">
                  <table class="w-full table-fixed border-separate border-spacing-0">
                    <thead>
                      <tr id="stockHead"></tr>
                    </thead>
                    <tbody id="stockRows"></tbody>
                    <tfoot>
                      <tr class="h-[256px]">
                        <td class="border-r border-[#82858f]"></td><td class="border-r border-[#82858f]"></td><td class="border-r border-[#82858f]"></td><td class="border-r border-[#82858f]"></td><td class="border-r border-[#82858f]"></td>
                      </tr>
                    </tfoot>
                  </table>
                  <div class="flex w-[17px] shrink-0 flex-col items-center bg-[#eceded] pb-2">
                    <div class="flex h-[31px] w-full items-center justify-center border-b border-[#82858f] bg-[#dedfe0]"><svg class="h-[7px] w-1" viewBox="0 0 4 7"><path d="M0 0l4 3.500L0 7z" /></svg></div>
                    <svg class="mt-[7px] h-[5px] w-[7px] shrink-0 opacity-40"><use href="#up" /></svg>
                    <svg class="mt-auto h-[5px] w-[7px] shrink-0 opacity-40"><use href="#down" /></svg>
                  </div>
                </div>
              </div>
            </div>
          </main>
        </div>
        <footer data-use="status" class="flex h-[38px] items-center justify-end overflow-hidden bg-[#26a6c1] pr-px font-['Noto_Sans','Trebuchet_MS',sans-serif] text-[15px] whitespace-nowrap text-white"></footer>
      </section>
    </div>

    <script>
      document.querySelectorAll("[data-use]").forEach((el) => {
        el.append(document.getElementById(el.dataset.use).content.cloneNode(true));
      });

      const byId = (id) => document.getElementById(id);
      const left = "border-r border-[#82858f] pl-[3px] overflow-hidden";
      const right = "border-r border-[#82858f] pr-[6px] text-right";
      const mid = "border-r border-[#82858f] text-center";

      // [label, width]; an empty width takes what is left
      function head(id, cols, tools) {
        byId(id).innerHTML = cols
          .map(([label, width]) => `<th class="relative h-[31px] border-r border-b border-[#9a9ca4] bg-linear-to-b from-[#e5e5e5] to-[#d9dadc] p-0 font-normal" style="${width ? `width:${width}px` : ""}">${
            tools ? '<svg class="absolute top-[3px] left-[3px] h-2 w-[6px]"><use href="#sort" /></svg><svg class="absolute right-px bottom-[9px] h-[11px] w-[10px]"><use href="#loupe" /></svg>' : ""
          }${label}</th>`)
          .join("");
      }

      head("cbnHead", [["Ordre", 77], ["Référence", 162], ["Lancer le", 111], ["Qté", 87], ["Echéance", 109], ["Explication"]], true);
      head("propHead", [["Semaine", 70], ["Approvisionneur", 110], ["Article", 170], ["Lancement", 84], ["Proposition", 91], ["Qte", 80], ["Echeance", 94], ["Explication"], ['<input type="checkbox" aria-label="Tout cocher" class="block mx-auto size-[13px] appearance-none rounded-xs border border-[#a0a2a6] bg-[#e2e2e2]" />', 30]]);
      head("stockHead", [["Semaine", 70], ["Date", 80], ["Mouvement"], ["Qté", 100], ["Stock", 100]]);
      byId("stockHead").children[1].classList.add("outline", "outline-[#7ea8d4]", "-outline-offset-1");

      const cbn = `32|PF.70504.BCL.CPL11|22/11|00|650|22/11
33|PF.70684.BCL.CPL0_|31/10|16|35|01/11
34|PF.70684.BCL.CPL0_|29/11|16|35|01/12
35|PF.70504.BCL.CPL12|25/10|00|240|25/10
36|PF.70504.BCL.CPL12|22/11|00|650|22/11
37|PF.70504.BCL.CPL03|25/10|00|750|25/10
38|PF.70504.BCL.CPL03|22/11|00|700|22/11
39|PF.70504.BCL.CPL04|22/11|00|800|22/11
40|PF.70780.BCL.CPL01|19/07|00|17|19/07
41|PF.70780.BCL.CPL01|26/07|00|77|26/07
42|PF.70780.BCL.CPL01|20/09|00|80|20/09
43|PF.70780.BCL.CPL01|01/11|00|34|01/11
44|PF.70780.BCL.CPL01|01/12|00|62|01/12
45|PF.70789.BCL.CPL05|24/10|16|187|25/10
46|PF.70789.BCL.CPL05|21/11|16|150|22/11
47|PF.70789.BCL.CPL02|24/10|15|205|25/10
48|PF.70789.BCL.CPL02|21/11|16|135|22/11
49|PF.70789.BCL.CPL01|24/10|15|299|25/10
50|PF.70789.BCL.CPL01|31/10|14|417|01/11
51|PF.70789.BCL.CPL01|21/11|16|150|22/11
52|PF.70789.BCL.CPL01|29/11|14|417|01/12
53|PF.70684.BCL.CPL05|21/11|16|39|22/11|POQ
54|PF.70684.BCL.CPL03|21/11|16|2|22/11|POQ
55|PF.70800.BCL.CPL05|29/10|16|33|30/10
56|PF.70800.BCL.CPL05|21/11|16|105|22/11
57|PF.70780.BCL.CPL02|19/07|00|67|19/07|POQ
58|PF.70780.BCL.CPL02|20/09|00|70|20/09|POQ
59|PF.70780.BCL.CPL05|24/05|00|42|24/05
60|PF.70780.BCL.CPL05|19/07|00|167|19/07
61|PF.70780.BCL.CPL05|26/07|00|32|26/07
62|PF.70780.BCL.CPL05|20/09|00|20|20/09
63|PS.70504.BCL.CON11|25/10|00|251|25/10
64|PS.70504.BCL.CON11|22/11|00|650|22/11
65|PC.71291.BCL.PLA02|23/08|00|63|23/08
66|PC.71291.BCL.PLA02|30/08|00|60|30/08
67|PC.71291.BCL.PLA02|03/09|00|23|03/09
68|PC.71291.BCL.PLA02|06/09|00|120|06/09
69|PC.71291.BCL.PLA02|13/09|00|120|13/09
70|PC.71291.BCL.PLA02|20/09|00|180|20/09
71|PS.70504.BCL.CON12|22/11|00|596|22/11
72|PS.70504.BCL.PLA04|22/11|00|251|22/11`;

      byId("cbnRows").innerHTML = cbn
        .split("\n")
        .map((line) => {
          const [n, ref, start, hour, qty, due, rule] = line.split("|");
          const why = rule ? `POQ, période du ${due}/2019` : `LFL, besoin pour le ${due}/2019 = ${qty}`;
          return `<tr class="leading-[18px] whitespace-nowrap"><td class="${left}">POF_${n}</td><td class="${left}">${ref}</td><td class="${left}">${start}/2019 ${hour}:00</td><td class="${right}">${qty},00</td><td class="${left}">${due}/2019 00:00</td><td class="${left}">${why}</td></tr>`;
        })
        .join("");

      const props = [
        ["S13", "PS.70504.BAS.PRE", "25/03/2019", 87, 636],
        ["S21", "PF.70780.BCL.CPL05", "24/05/2019", 59, 42],
        ["S29", "PF.70780.BCL.CPL01", "19/07/2019", 40, 17],
        ["S29", "PF.70780.BCL.CPL02", "19/07/2019", 57, 67, "POQ, période du 19/07/2019 au 19/08/2019, besoi"],
        ["S29", "PF.70780.BCL.CPL05", "19/07/2019", 60, 167],
        ["S30", "PF.70780.BCL.CPL01", "26/07/2019", 41, 77],
        ["S30", "PF.70780.BCL.CPL05", "26/07/2019", 61, 32],
        ["S34", "PF.71291.BCL.CPL03", "23/08/2019", 17, 50],
        ["S34", "PF.71291.BCL.CPL02", "23/08/2019", 2, 63],
        ["S34", "PC.71291.BCL.PLA02", "23/08/2019", 65, 63],
        ["S34", "PC.71291.BCL.PLA03", "23/08/2019", 73, 50],
      ];
      const picked = "h-[18px] leading-4 whitespace-nowrap bg-linear-to-b from-[#dfecfc] to-[#c2dcf8] [&>td]:border-y [&>td]:border-y-[#6f9ccc]";
      byId("propRows").innerHTML = props
        .map(([week, ref, date, n, qty, why], i) => `<tr class="${i === 5 ? picked : i === 10 ? "h-[15px] leading-[15px] whitespace-nowrap" : "h-[18px] leading-[18px] whitespace-nowrap"}"><td class="${mid}">${week}</td><td class="${mid}"></td><td class="${left}">${ref}</td><td class="${right}">${date}</td><td class="${left}">POF_${n}</td><td class="${right}">${qty},00</td><td class="${right}">${date}</td><td class="${left}">${why || `LFL, besoin pour le ${date} = ${qty}`}</td><td class="${mid}"><input type="checkbox" aria-label="POF_${n}" class="block mx-auto size-[13px] appearance-none rounded-xs border border-[#a0a2a6] bg-[#e2e2e2]" /></td></tr>`)
        .join("");

      const moves = [
        ["", "", "STOCK ACTUEL + STOCK CONTROLE", "+6", "+6"],
        ["S29", "19/07", "RECEPTION POF_40", "+17", "+23", "text-[#f81414]"],
        ["S29", "19/07", "LIVRAISON CC C19052926 / 10", "-23", "+0"],
        ["S30", "26/07", "RECEPTION POF_41", "+77", "+77", "text-[#f81414]"],
        ["S30", "26/07", "LIVRAISON CC C19052924 / 10", "-77", "+0"],
        ["S38", "20/09", "RECEPTION POF_42", "+80", "+80", "text-[#f81414]"],
        ["S38", "20/09", "LIVRAISON CC C19062520 / 10", "-80", "+0"],
        ["S40", "03/10", "RECEPTION OS S190930088 (DOM-BRIGITTE)", "+22", "+22", "text-[#3cb43c]"],
        ["S40", "03/10", "RECEPTION OS S190930109 (DOM-BRIGITTE)", "+51", "+73", "text-[#3cb43c]"],
        ["S44", "31/10", "LIVRAISON CC C1908213 / 10", "-45", "+28"],
        ["S44", "01/11", "RECEPTION POF_43", "+34", "+62", "text-[#f81414]"],
        ["S44", "01/11", "LIVRAISON CC PREV1907084 (NOV19) / 30", "-62", "+0"],
        ["S48", "01/12", "RECEPTION POF_44", "+62", "+62", "text-[#f81414]"],
        ["S48", "01/12", "LIVRAISON CC PREV1907085 (DEC19) / 30", "-62", "+0"],
      ];
      byId("stockRows").innerHTML = moves
        .map(([week, date, what, qty, stock, color], i) => `<tr class="${i ? "leading-[18px] whitespace-nowrap" : picked} ${color || ""}"><td class="${mid}">${week}</td><td class="${right}">${date && date + "/2019"}</td><td class="${left}">${what}</td><td class="${right}">${qty},00</td><td class="${right}">${stock},00</td></tr>`)
        .join("");

      const list = (id, items) => {
        byId(id).innerHTML = items
          .map((item, i) => `<li role="option" class="h-[18px] pl-1 leading-4 ${i ? "" : "bg-[#3397ff] text-white"}">${item}</li>`)
          .join("");
      };
      list("buyers", ["*", "ACHATS 1", "ACHATS 2", "ACHATS 3", "ACHATS 4"]);
      list("articles", ["*", "CEMB.FILM.BULL.001", "CEMB.INTGM.610*385", "FS.70113.STA.BRU01", "FS.70504.PIV.BRU11", "FS.90112.FEU.BRU01", "FS.90113.ETU.BRU01", "FS.90114.CAI.BRU01", "PC.70504.BCL.GYC01", "PC.71291.BCL.PLA02", "PC.71291.BCL.PLA03", "PC.71291.BCL.POL11", "PC.71291.BCL.SOU11", "PF.70504.BCL.CPL01", "PF.70504.BCL.CPL02", "PF.70504.BCL.CPL03"]);
    </script>
  </body>
</html>
